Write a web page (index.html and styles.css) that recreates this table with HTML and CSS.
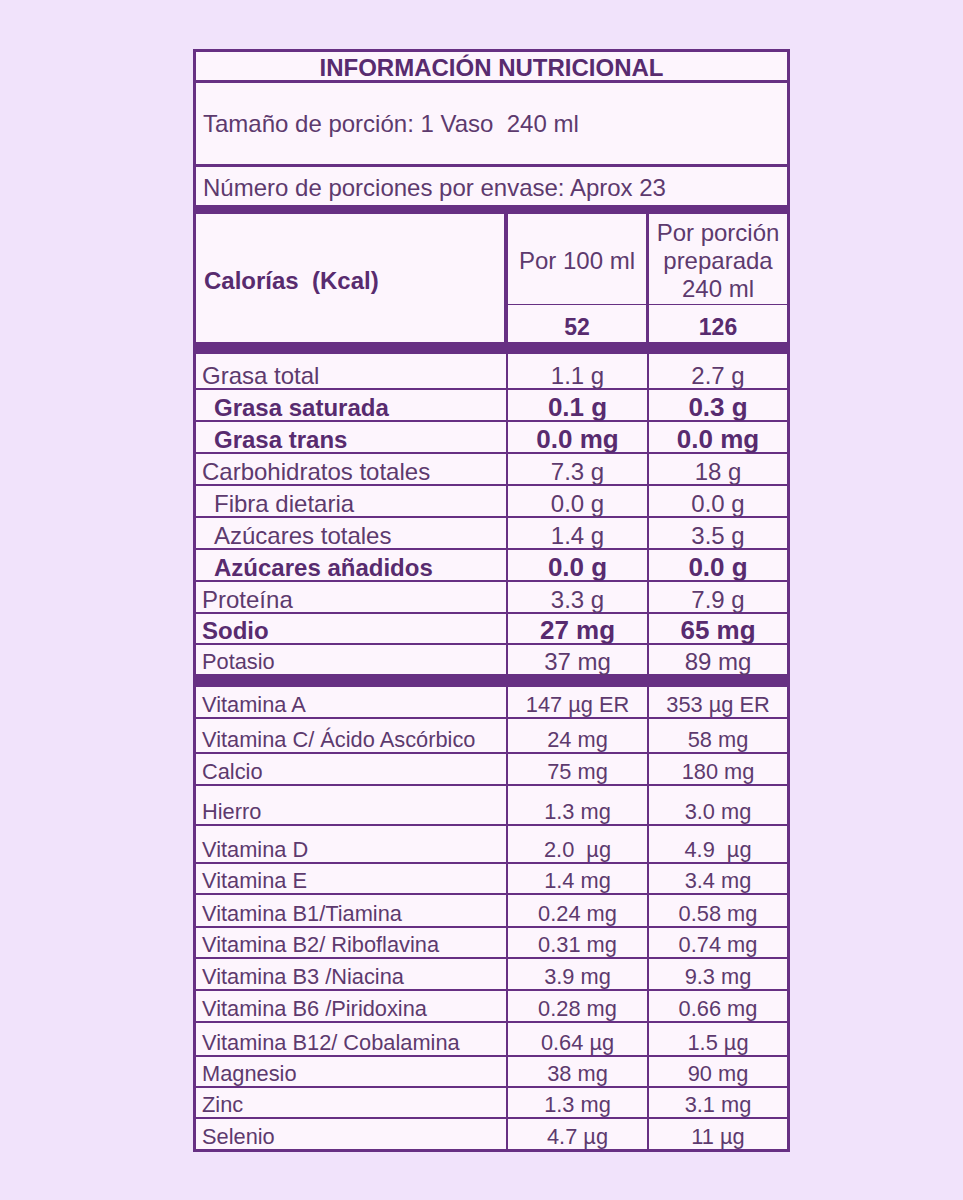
FILE: index.html
```html
<!DOCTYPE html>
<html lang="es">
<head>
<meta charset="utf-8">
<title>Información nutricional</title>
<link rel="stylesheet" href="styles.css">
</head>
<body>
<main class="page">
<table class="nt">
<colgroup><col class="c1"><col class="c2"><col class="c3"></colgroup>
<tbody>
<tr class="r-title"><th colspan="3" class="title">INFORMACIÓN NUTRICIONAL</th></tr>
<tr class="r-size"><td colspan="3" class="info size">Tamaño de porción: 1 Vaso&nbsp; 240 ml</td></tr>
<tr class="r-serv"><td colspan="3" class="info serv">Número de porciones por envase: Aprox 23</td></tr>
<tr class="band h9"><td colspan="3"></td></tr>
<tr class="r-head"><th rowspan="2" class="cal">Calorías&nbsp; (Kcal)</th><th class="hd hd1">Por 100 ml</th><th class="hd hd2">Por porción<br>preparada<br>240 ml</th></tr>
<tr class="r-kcal"><td class="kc kc1">52</td><td class="kc kc2">126</td></tr>
<tr class="band h12"><td colspan="3"></td></tr>

<tr class="row h36"><td class="lbl">Grasa total</td><td class="v1">1.1 g</td><td class="v2">2.7 g</td></tr>
<tr class="row h32"><td class="lbl ind b">Grasa saturada</td><td class="v1 bv">0.1 g</td><td class="v2 bv">0.3 g</td></tr>
<tr class="row h32"><td class="lbl ind b">Grasa trans</td><td class="v1 bv">0.0 mg</td><td class="v2 bv">0.0 mg</td></tr>
<tr class="row h32"><td class="lbl">Carbohidratos totales</td><td class="v1">7.3 g</td><td class="v2">18 g</td></tr>
<tr class="row h32"><td class="lbl ind">Fibra dietaria</td><td class="v1">0.0 g</td><td class="v2">0.0 g</td></tr>
<tr class="row h32"><td class="lbl ind">Azúcares totales</td><td class="v1">1.4 g</td><td class="v2">3.5 g</td></tr>
<tr class="row h32"><td class="lbl ind b">Azúcares añadidos</td><td class="v1 bv">0.0 g</td><td class="v2 bv">0.0 g</td></tr>
<tr class="row h32"><td class="lbl">Proteína</td><td class="v1">3.3 g</td><td class="v2">7.9 g</td></tr>
<tr class="row h31"><td class="lbl b">Sodio</td><td class="v1 bv">27 mg</td><td class="v2 bv">65 mg</td></tr>
<tr class="row h29 nb"><td class="lbl sm">Potasio</td><td class="v1">37 mg</td><td class="v2">89 mg</td></tr>
<tr class="band h13"><td colspan="3"></td></tr>

<tr class="row vit h32"><td class="lbl">Vitamina A</td><td class="v1">147 µg ER</td><td class="v2">353 µg ER</td></tr>
<tr class="row vit h35"><td class="lbl">Vitamina C/ Ácido Ascórbico</td><td class="v1">24 mg</td><td class="v2">58 mg</td></tr>
<tr class="row vit h32"><td class="lbl">Calcio</td><td class="v1">75 mg</td><td class="v2">180 mg</td></tr>
<tr class="row vit h40"><td class="lbl">Hierro</td><td class="v1">1.3 mg</td><td class="v2">3.0 mg</td></tr>
<tr class="row vit h38"><td class="lbl">Vitamina D</td><td class="v1">2.0&nbsp; µg</td><td class="v2">4.9&nbsp; µg</td></tr>
<tr class="row vit h31"><td class="lbl">Vitamina E</td><td class="v1">1.4 mg</td><td class="v2">3.4 mg</td></tr>
<tr class="row vit h33"><td class="lbl">Vitamina B1/Tiamina</td><td class="v1">0.24 mg</td><td class="v2">0.58 mg</td></tr>
<tr class="row vit h31"><td class="lbl">Vitamina B2/ Riboflavina</td><td class="v1">0.31 mg</td><td class="v2">0.74 mg</td></tr>
<tr class="row vit h32"><td class="lbl">Vitamina B3 /Niacina</td><td class="v1">3.9 mg</td><td class="v2">9.3 mg</td></tr>
<tr class="row vit h32"><td class="lbl">Vitamina B6 /Piridoxina</td><td class="v1">0.28 mg</td><td class="v2">0.66 mg</td></tr>
<tr class="row vit h34"><td class="lbl">Vitamina B12/ Cobalamina</td><td class="v1">0.64 µg</td><td class="v2">1.5 µg</td></tr>
<tr class="row vit h31"><td class="lbl">Magnesio</td><td class="v1">38 mg</td><td class="v2">90 mg</td></tr>
<tr class="row vit h31"><td class="lbl">Zinc</td><td class="v1">1.3 mg</td><td class="v2">3.1 mg</td></tr>
<tr class="row vit h30 nb"><td class="lbl">Selenio</td><td class="v1">4.7 µg</td><td class="v2">11 µg</td></tr>
</tbody>
</table>
</main>
</body>
</html>
```

FILE: styles.css
```css
* { box-sizing: border-box; }

html, body {
  margin: 0;
  padding: 0;
}

body {
  background: #f1e3fb;
  font-family: "Liberation Sans", Arial, sans-serif;
  color: #5d3a6e;
  width: 963px;
  min-height: 1200px;
}

.page {
  padding: 49px 0 0 193px;
}

.nt {
  width: 597px;
  table-layout: fixed;
  border-collapse: separate;
  border-spacing: 0;
  border: 3px solid #673083;
  background: #fdf5fd;
}

.c1 { width: 312px; }
.c2 { width: 141px; }
.c3 { width: 138px; }

.nt td,
.nt th {
  padding: 0;
  font-size: 24px;
  line-height: 24px;
  font-weight: normal;
  text-align: left;
  vertical-align: bottom;
  white-space: nowrap;
  border-color: #673083;
  border-style: solid;
  border-width: 0;
}

/* header block */
.r-title { height: 30px; }
.title {
  font-size: 24px !important;
  font-weight: bold !important;
  text-align: center !important;
  vertical-align: top !important;
  padding-top: 4px !important;
  color: #582b6f;
  border-bottom-width: 3px !important;
}

.r-size { height: 84px; }
.size {
  vertical-align: middle !important;
  padding-left: 7px !important;
  border-bottom-width: 3px !important;
}

.r-serv { height: 38px; }
.serv {
  vertical-align: top !important;
  padding-top: 9px !important;
  padding-left: 7px !important;
}

.band td {
  background: #673083;
  font-size: 0;
  line-height: 0;
}
.h9 { height: 9px; }
.h12 { height: 12px; }
.h13 { height: 13px; }

.r-head { height: 91px; }
.cal {
  font-weight: bold !important;
  color: #582b6f;
  vertical-align: middle !important;
  padding-top: 6px !important;
  padding-left: 8px !important;
  border-right-width: 4px !important;
}
.hd {
  text-align: center !important;
  vertical-align: middle !important;
  line-height: 28px !important;
  padding-top: 4px !important;
  border-bottom-width: 1px !important;
}
.hd1 { border-right-width: 3px !important; }

.r-kcal { height: 37px; }
.kc {
  font-size: 23px !important;
  font-weight: bold !important;
  color: #582b6f;
  text-align: center !important;
  padding-bottom: 3px !important;
}
.kc1 { border-right-width: 3px !important; }

/* data rows */
.row td { border-bottom-width: 2px; }
.row.nb td { border-bottom-width: 0; }

.lbl {
  padding-left: 6px !important;
  border-right-width: 2px !important;
}
.v1 {
  text-align: center !important;
  border-right-width: 2px !important;
}
.v2 { text-align: center !important; }

.ind { padding-left: 18px !important; }
.b {
  font-weight: bold !important;
  color: #582b6f;
}
.bv {
  font-weight: bold !important;
  font-size: 26px !important;
  color: #582b6f;
  padding-bottom: 1px !important;
}
.sm { font-size: 21.8px !important; }
.vit td { font-size: 21.8px; }

.h29 { height: 29px; }
.h30 { height: 30px; }
.h31 { height: 31px; }
.h32 { height: 32px; }
.h33 { height: 33px; }
.h34 { height: 34px; }
.h35 { height: 35px; }
.h36 { height: 36px; }
.h38 { height: 38px; }
.h40 { height: 40px; }
```
